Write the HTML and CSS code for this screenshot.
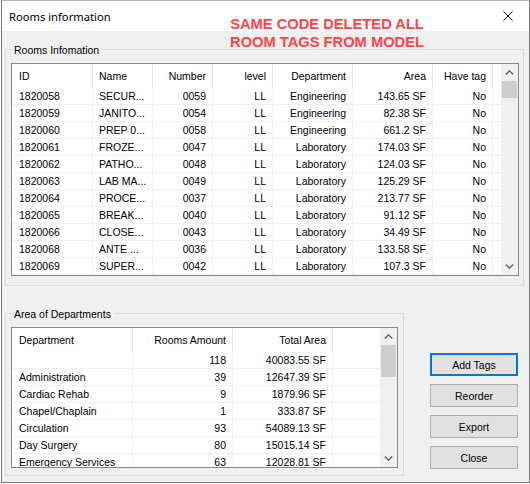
FILE: index.html
```html
<!DOCTYPE html>
<html>
<head>
<meta charset="utf-8">
<link rel="stylesheet" href="styles.css">
</head>
<body>
<div class="window">
  <div class="titlebar">
    <span class="title">Rooms information</span>
    <svg class="close" width="10" height="10" viewBox="0 0 10 10"><path d="M0.5 0.5 L9.5 9.5 M9.5 0.5 L0.5 9.5" stroke="#000" stroke-width="1" fill="none"/></svg>
  </div>
  <div class="note">SAME CODE DELETED ALL<br>ROOM TAGS FROM MODEL</div>
  <div class="client">
    <section class="group group-rooms">
      <div class="legend">Rooms Infomation</div>
      <div class="listview lv-rooms">
        <div class="lv-content">
          <div class="lv-row lv-head"><div class="cell">ID</div><div class="cell">Name</div><div class="cell r">Number</div><div class="cell r">level</div><div class="cell r">Department</div><div class="cell r">Area</div><div class="cell r">Have tag</div><div class="fill"></div></div>
          <div class="lv-row"><div class="cell">1820058</div><div class="cell">SECUR...</div><div class="cell r">0059</div><div class="cell r">LL</div><div class="cell r">Engineering</div><div class="cell r">143.65 SF</div><div class="cell r">No</div><div class="fill"></div></div>
          <div class="lv-row"><div class="cell">1820059</div><div class="cell">JANITO...</div><div class="cell r">0054</div><div class="cell r">LL</div><div class="cell r">Engineering</div><div class="cell r">82.38 SF</div><div class="cell r">No</div><div class="fill"></div></div>
          <div class="lv-row"><div class="cell">1820060</div><div class="cell">PREP 0...</div><div class="cell r">0058</div><div class="cell r">LL</div><div class="cell r">Engineering</div><div class="cell r">661.2 SF</div><div class="cell r">No</div><div class="fill"></div></div>
          <div class="lv-row"><div class="cell">1820061</div><div class="cell">FROZE...</div><div class="cell r">0047</div><div class="cell r">LL</div><div class="cell r">Laboratory</div><div class="cell r">174.03 SF</div><div class="cell r">No</div><div class="fill"></div></div>
          <div class="lv-row"><div class="cell">1820062</div><div class="cell">PATHO...</div><div class="cell r">0048</div><div class="cell r">LL</div><div class="cell r">Laboratory</div><div class="cell r">124.03 SF</div><div class="cell r">No</div><div class="fill"></div></div>
          <div class="lv-row"><div class="cell">1820063</div><div class="cell">LAB MA...</div><div class="cell r">0049</div><div class="cell r">LL</div><div class="cell r">Laboratory</div><div class="cell r">125.29 SF</div><div class="cell r">No</div><div class="fill"></div></div>
          <div class="lv-row"><div class="cell">1820064</div><div class="cell">PROCE...</div><div class="cell r">0037</div><div class="cell r">LL</div><div class="cell r">Laboratory</div><div class="cell r">213.77 SF</div><div class="cell r">No</div><div class="fill"></div></div>
          <div class="lv-row"><div class="cell">1820065</div><div class="cell">BREAK...</div><div class="cell r">0040</div><div class="cell r">LL</div><div class="cell r">Laboratory</div><div class="cell r">91.12 SF</div><div class="cell r">No</div><div class="fill"></div></div>
          <div class="lv-row"><div class="cell">1820066</div><div class="cell">CLOSE...</div><div class="cell r">0043</div><div class="cell r">LL</div><div class="cell r">Laboratory</div><div class="cell r">34.49 SF</div><div class="cell r">No</div><div class="fill"></div></div>
          <div class="lv-row"><div class="cell">1820068</div><div class="cell">ANTE ...</div><div class="cell r">0036</div><div class="cell r">LL</div><div class="cell r">Laboratory</div><div class="cell r">133.58 SF</div><div class="cell r">No</div><div class="fill"></div></div>
          <div class="lv-row"><div class="cell">1820069</div><div class="cell">SUPER...</div><div class="cell r">0042</div><div class="cell r">LL</div><div class="cell r">Laboratory</div><div class="cell r">107.3 SF</div><div class="cell r">No</div><div class="fill"></div></div>
        </div>
        <div class="vscroll">
          <div class="sb-btn"><svg width="9" height="5" viewBox="0 0 9 5"><polyline points="0.8,4.4 4.5,0.8 8.2,4.4" fill="none" stroke="#606060" stroke-width="1.4"/></svg></div>
          <div class="sb-track"><div class="sb-thumb"></div></div>
          <div class="sb-btn"><svg width="9" height="5" viewBox="0 0 9 5"><polyline points="0.8,0.6 4.5,4.2 8.2,0.6" fill="none" stroke="#606060" stroke-width="1.4"/></svg></div>
        </div>
      </div>
    </section>
    <div class="lower">
      <section class="group group-dept">
        <div class="legend">Area of Departments</div>
        <div class="listview lv-dept">
          <div class="lv-content">
            <div class="lv-row lv-head"><div class="cell">Department</div><div class="cell r">Rooms Amount</div><div class="cell r">Total Area</div><div class="fill"></div></div>
            <div class="lv-row"><div class="cell"></div><div class="cell r">118</div><div class="cell r">40083.55 SF</div><div class="fill"></div></div>
            <div class="lv-row"><div class="cell">Administration</div><div class="cell r">39</div><div class="cell r">12647.39 SF</div><div class="fill"></div></div>
            <div class="lv-row"><div class="cell">Cardiac Rehab</div><div class="cell r">9</div><div class="cell r">1879.96 SF</div><div class="fill"></div></div>
            <div class="lv-row"><div class="cell">Chapel/Chaplain</div><div class="cell r">1</div><div class="cell r">333.87 SF</div><div class="fill"></div></div>
            <div class="lv-row"><div class="cell">Circulation</div><div class="cell r">93</div><div class="cell r">54089.13 SF</div><div class="fill"></div></div>
            <div class="lv-row"><div class="cell">Day Surgery</div><div class="cell r">80</div><div class="cell r">15015.14 SF</div><div class="fill"></div></div>
            <div class="lv-row"><div class="cell">Emergency Services</div><div class="cell r">63</div><div class="cell r">12028.81 SF</div><div class="fill"></div></div>
          </div>
          <div class="vscroll">
            <div class="sb-btn"><svg width="9" height="5" viewBox="0 0 9 5"><polyline points="0.8,4.4 4.5,0.8 8.2,4.4" fill="none" stroke="#606060" stroke-width="1.4"/></svg></div>
            <div class="sb-track"><div class="sb-thumb"></div></div>
            <div class="sb-btn"><svg width="9" height="5" viewBox="0 0 9 5"><polyline points="0.8,0.6 4.5,4.2 8.2,0.6" fill="none" stroke="#606060" stroke-width="1.4"/></svg></div>
          </div>
        </div>
      </section>
      <div class="buttons">
        <button class="btn default">Add Tags</button>
        <button class="btn">Reorder</button>
        <button class="btn">Export</button>
        <button class="btn">Close</button>
      </div>
    </div>
  </div>
</div>
</body>
</html>
```
FILE: styles.css
```css
body {
  margin: 0;
  background: #ffffff;
  font-family: "Liberation Sans", Arial, sans-serif;
  font-size: 10.5px;
  color: #000;
}
.window {
  margin-left: 1px;
  width: 529px;
  height: 483px;
  box-sizing: border-box;
  border: 1px solid #7a7a7a;
  border-top-color: #b4b4b4;
  background: #f0f0f0;
  position: relative;
  display: flex;
  flex-direction: column;
}
.titlebar {
  flex: none;
  height: 30px;
  background: #ffffff;
  display: flex;
  align-items: center;
  justify-content: space-between;
  padding: 0 16px 0 7px;
}
.title {
  font-family: "Noto Sans", "Segoe UI", sans-serif;
  font-size: 11.2px;
}
.close {
  display: block;
}
.note {
  position: absolute;
  left: 225px;
  top: 14px;
  width: 200px;
  text-align: center;
  color: #ff4444;
  font-family: "Liberation Sans", Arial, sans-serif;
  font-weight: bold;
  font-size: 14.7px;
  line-height: 18px;
  white-space: nowrap;
}
.client {
  padding-left: 3px;
}
.group {
  border: 1px solid #dcdcdc;
  box-sizing: border-box;
}
.legend {
  margin-top: -7px;
  padding: 0 3px;
  background: #f0f0f0;
  width: max-content;
  height: 14px;
  line-height: 14px;
}
.group-rooms {
  margin-top: 18px;
  width: 519px;
  padding: 0 4px 9px 5px;
}
.listview {
  margin-top: 6px;
  border: 1px solid #828790;
  background: #ffffff;
  display: flex;
  box-sizing: border-box;
}
.lv-rooms {
  height: 213px;
}
.lv-dept {
  height: 141px;
}
.lv-content {
  flex: 1;
  overflow: hidden;
}
.lv-row {
  display: grid;
  height: 17px;
  box-sizing: border-box;
  border-bottom: 1px solid #f0f0f0;
}
.lv-rooms .lv-row {
  grid-template-columns: 81px 60px 60px 60px 80px 80px 60px 1fr;
}
.lv-dept .lv-row {
  grid-template-columns: 121px 100px 100px 1fr;
}
.lv-row.lv-head {
  height: 24px;
  border-bottom: none;
}
.cell {
  padding: 0 6px;
  white-space: nowrap;
  overflow: hidden;
  border-right: 1px solid #f0f0f0;
  display: flex;
  align-items: center;
}
.cell:first-child {
  padding-left: 7px;
}
.cell.r {
  justify-content: flex-end;
}
.lv-head .cell {
  border-right-color: #e5e5e5;
}
.vscroll {
  flex: none;
  width: 17px;
  background: #f0f0f0;
  display: flex;
  flex-direction: column;
}
.sb-btn {
  flex: none;
  height: 17px;
  display: flex;
  align-items: center;
  justify-content: center;
}
.sb-btn svg {
  display: block;
}
.sb-track {
  flex: 1;
}
.sb-thumb {
  margin: 0 1px;
  background: #cdcdcd;
}
.lv-rooms .sb-thumb {
  height: 17px;
}
.lv-dept .sb-thumb {
  height: 32px;
}
.lower {
  display: flex;
  align-items: flex-start;
  margin-top: 27px;
}
.group-dept {
  width: 399px;
  padding: 0 5px 7px 5px;
}
.buttons {
  margin: 40px 0 0 26px;
  display: flex;
  flex-direction: column;
  gap: 8px;
}
.btn {
  width: 88px;
  height: 23px;
  box-sizing: border-box;
  border: 1px solid #adadad;
  background: #e1e1e1;
  font-family: "Liberation Sans", Arial, sans-serif;
  font-size: 10.5px;
  color: #000;
  padding: 0;
  margin: 0;
}
.btn.default {
  border: 2px solid #0078d7;
}
```
